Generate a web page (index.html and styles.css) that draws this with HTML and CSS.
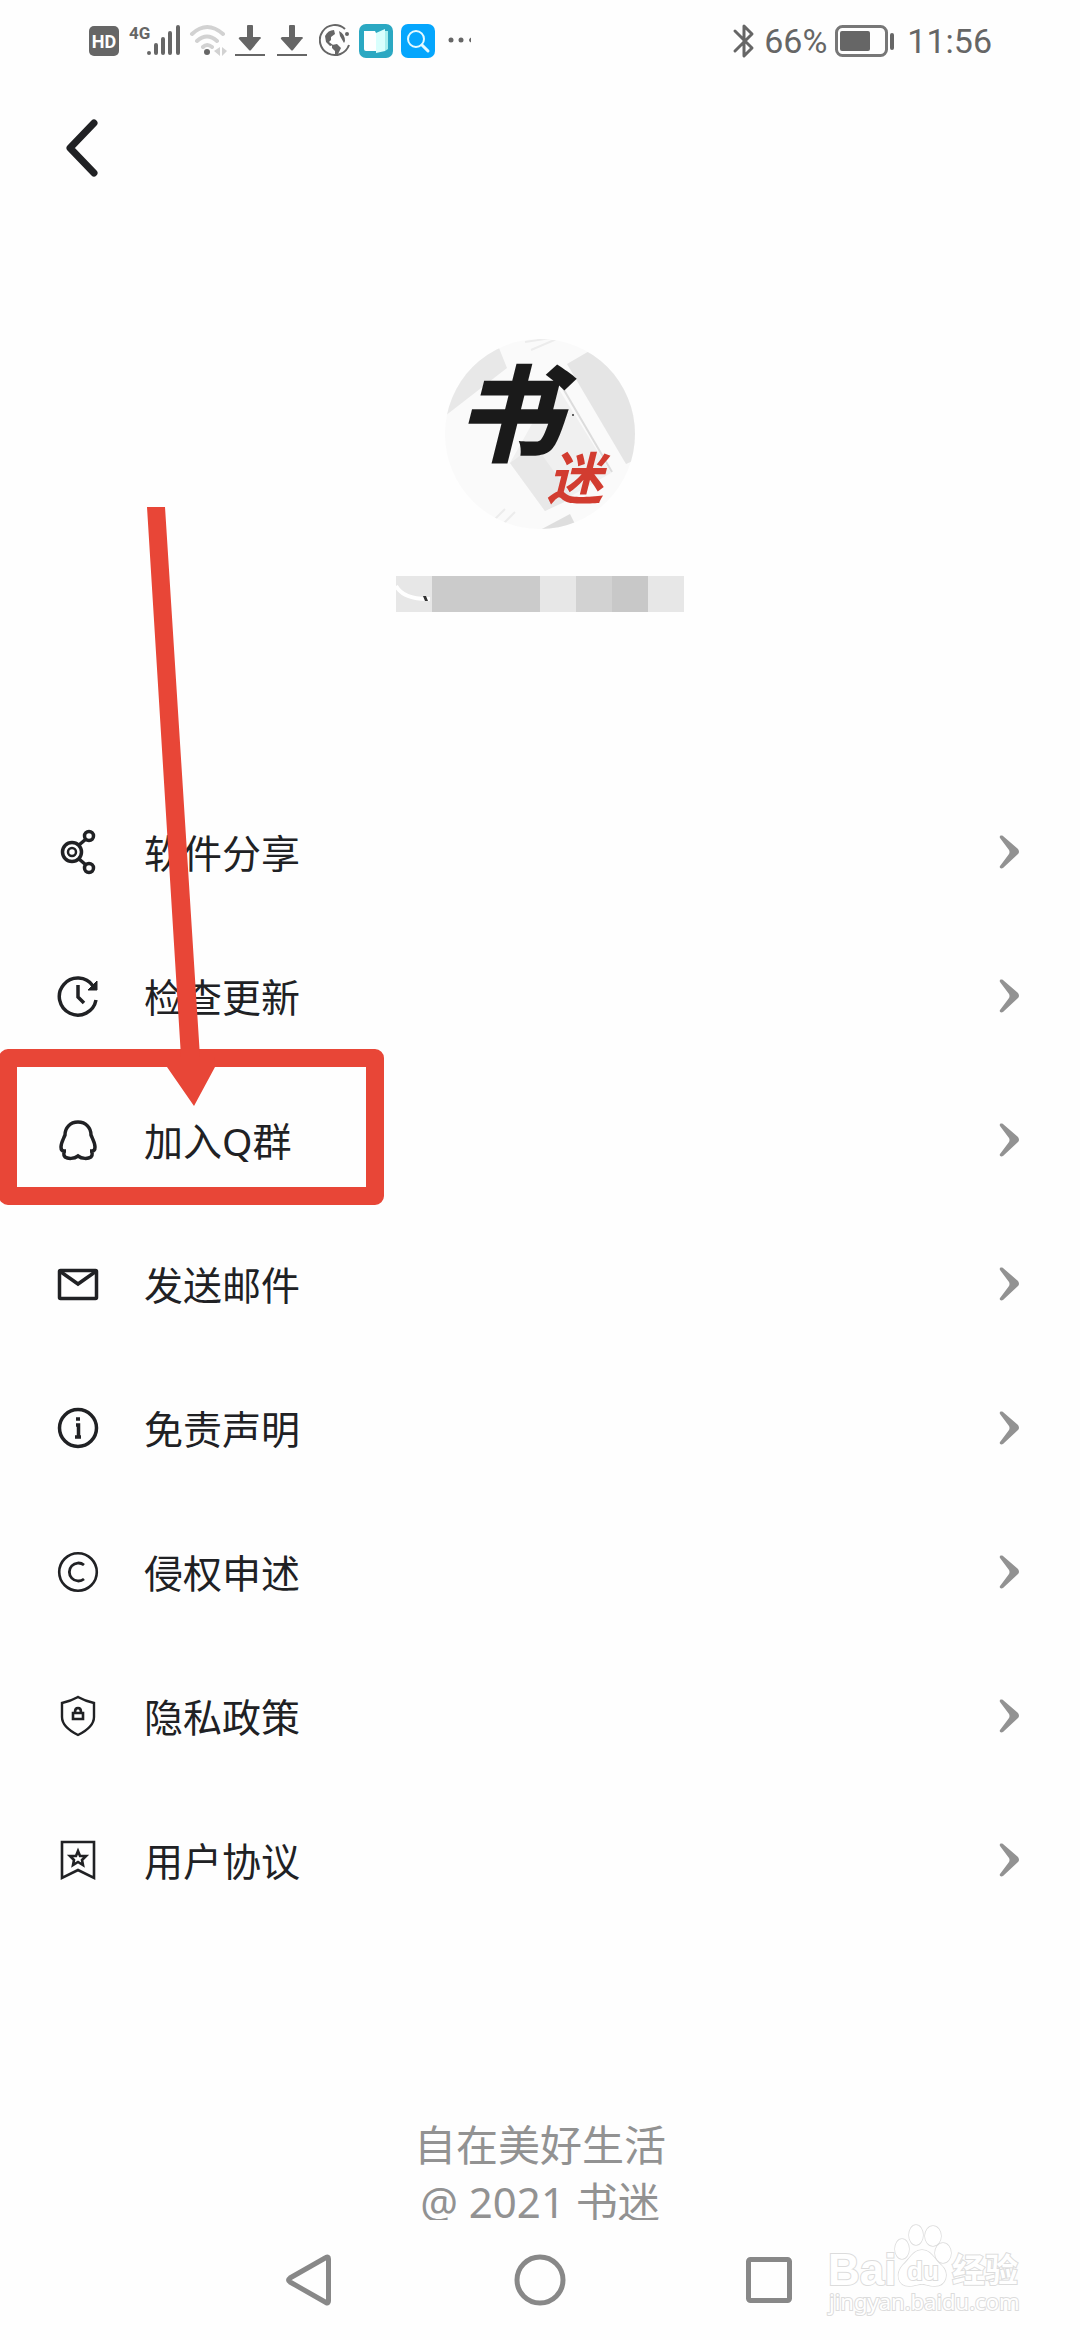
FILE: index.html
```html
<!DOCTYPE html>
<html lang="zh-CN">
<head>
<meta charset="UTF-8" />
<meta name="viewport" content="width=device-width, initial-scale=1.0" />
<title>书迷</title>
<link rel="stylesheet" href="styles.css">
</head>
<body>
<div class="status-bar">
  <div class="status-left">
    <svg width="33" height="36" viewBox="0 0 33 36">
      <rect x="1" y="3" width="30" height="30" rx="5" fill="#666"/>
      <text class="hd" x="16" y="25" text-anchor="middle">HD</text>
    </svg>
    <svg width="52" height="36" viewBox="0 0 52 36">
      <text class="net" x="0" y="16">4G</text>
      <g stroke="#666" stroke-width="4" stroke-linecap="round">
        <path d="M20 30v.1M27 22v8M34 16v14M41 10v20M49 4v26"/>
      </g>
    </svg>
    <svg width="38" height="36" viewBox="0 0 38 36">
      <g fill="none" stroke="#d2d2d2" stroke-width="4" stroke-linecap="round">
        <path d="M3 11Q18 -3 34 11M8 18Q18 9 28 18M14 24Q18 20 23 24"/>
      </g>
      <circle cx="18" cy="29" r="3" fill="#666"/>
      <path d="M31 24v9l-6-5zM33 24v9l5-5z" fill="#d2d2d2"/>
    </svg>
    <svg width="34" height="36" viewBox="0 0 34 36">
      <path d="M12 3q0-1 1-1h4q1 0 1 1v11h7q2 1 0 2L16 27q-1 1-2 0L4 16q-1-1 1-2h7z" fill="#666"/>
      <path d="M0 32h30" stroke="#666" stroke-width="2"/>
    </svg>
    <svg width="34" height="36" viewBox="0 0 34 36">
      <path d="M12 3q0-1 1-1h4q1 0 1 1v11h7q2 1 0 2L16 27q-1 1-2 0L4 16q-1-1 1-2h7z" fill="#666"/>
      <path d="M0 32h30" stroke="#666" stroke-width="2"/>
    </svg>
    <svg width="32" height="36" viewBox="0 0 32 36">
      <path d="M26 6A15 15 0 1 0 30 22" fill="none" stroke="#666" stroke-width="2"/>
      <path d="M6 13q3-6 9-6l1 4-4 3v3l-2 2 4 3-3 1-4-4zM13 22l5-1 4 4-3 6-3 1 0-4-3-3zM20 8q6 3 6 10l-1 2-4-7z" fill="#666"/>
      <circle cx="28" cy="11" r="2" fill="#666"/>
    </svg>
    <svg width="34" height="36" viewBox="0 0 34 36">
      <rect y="1" width="34" height="34" rx="7" fill="#2ba8c2"/>
      <path d="M5 8h11l1 2v18H7q-2 0-2-2z" fill="#fff"/>
      <path d="M17 10l9-4v22l-9 2z" fill="#d9fffd"/>
      <path d="M26 8h3v18l-3 2z" fill="#a9efee"/>
    </svg>
    <svg width="34" height="36" viewBox="0 0 34 36">
      <rect y="1" width="34" height="34" rx="7" fill="#05a6fd"/>
      <circle cx="15" cy="16" r="8" fill="none" stroke="#e4faff" stroke-width="2"/>
      <path d="M21 22l6 6" stroke="#e4faff" stroke-width="3" stroke-linecap="round"/>
    </svg>
    <svg width="28" height="36" viewBox="0 0 28 36">
      <g fill="#666"><circle cx="8" cy="17" r="2.5"/><circle cx="18" cy="17" r="2.5"/><path d="M28 14.500v5q-2-1-2-2.500t2-2.500z"/></g>
    </svg>
  </div>
  <div class="status-right">
    <svg width="24" height="36" viewBox="0 0 24 36">
      <path d="M3 8l17 17-8 8V3l8 8L3 28" fill="none" stroke="#666" stroke-width="3" stroke-linecap="round" stroke-linejoin="round"/>
    </svg>
    <span>66%</span>
    <svg class="battery" width="60" height="36" viewBox="0 0 60 36">
      <rect x="1.500" y="3.500" width="50" height="29" rx="6" fill="none" stroke="#777" stroke-width="3"/>
      <rect x="5" y="8" width="30" height="20" rx="2" fill="#666"/>
      <rect x="55" y="10" width="4" height="17" rx="2" fill="#666"/>
    </svg>
    <span>11:56</span>
  </div>
</div>

<main class="content">
  <header class="top-bar">
    <button class="back" aria-label="返回">
      <svg width="36" height="60" viewBox="0 0 36 60">
        <path d="M32 5L8 30l24 25" fill="none" stroke="#202124" stroke-width="7" stroke-linecap="round" stroke-linejoin="round"/>
      </svg>
    </button>
  </header>

  <section class="profile">
    <svg class="avatar" width="190" height="192" viewBox="0 0 190 192">
      <defs><clipPath id="round"><circle cx="95" cy="96" r="95"/></clipPath></defs>
      <g clip-path="url(#round)">
        <rect width="190" height="192" fill="#fafafa"/>
        <path d="M0 0h50l12 30L0 78z" fill="#e8e8e8"/>
        <path d="M122 26l24-14 44 0v110l-9 4z" fill="#e5e5e5"/>
        <path d="M65 125l45-80 56 90-66 38z" fill="#f0f0f0"/>
        <path d="M109 35l58 99" stroke="#dcdcdc" stroke-width="2"/>
        <path d="M65 125l35 48 28-13-38-53z" fill="#e8e8e8"/>
        <path d="M95 192l30-16 8 16z" fill="#dedede"/>
        <path d="M46 185l14-14M56 188l14-14M80 4l26-4M86 12l28-12" stroke="#ececec" stroke-width="2"/>
      </g>
      <circle cx="128" cy="77" r="1" fill="#333"/>
      <text class="logo-shu" x="10" y="116">书</text>
      <text class="logo-mi" x="102" y="161">迷</text>
    </svg>
    <div class="mosaic">
      <i class="tone-1"></i><i class="tone-3"></i><i class="tone-3"></i><i class="tone-3"></i><i class="tone-1"></i><i class="tone-2"></i><i class="tone-4"></i><i class="tone-1"></i>
      <svg class="stroke" width="36" height="36" viewBox="0 0 36 36">
        <path d="M0 10q8 14 34 13" fill="none" stroke="#fff" stroke-width="4"/>
        <path d="M27 20l3 0 2 5-3 0z" fill="#333"/>
      </svg>
    </div>
  </section>

  <ul class="menu">
    <li><a href="#" class="item">
      <svg class="icon" viewBox="0 0 40 40">
        <circle cx="14" cy="20" r="9.500"/><circle cx="14" cy="20" r="4" stroke-width="2.500"/>
        <circle cx="31" cy="4" r="4.500"/><circle cx="31" cy="36" r="4.500"/>
        <path d="M21 13l7-6M21 27l7 6"/>
      </svg>
      <span>软件分享</span>
      <svg class="arrow" viewBox="0 0 20 34"><path d="M1 3C0 1 2 0 4 1l15 13q2 3 0 5L4 33c-2 1-4 0-3-2l9-12q1-2 0-4z"/></svg>
    </a></li>
    <li><a href="#" class="item">
      <svg class="icon" viewBox="0 0 40 40">
        <path d="M35 10A18.500 18.500 0 1 0 38 24"/><path d="M20 9v12l6 6"/>
        <path d="M39 5v9H30z" fill="#202124" stroke-width="1"/>
      </svg>
      <span>检查更新</span>
      <svg class="arrow" viewBox="0 0 20 34"><path d="M1 3C0 1 2 0 4 1l15 13q2 3 0 5L4 33c-2 1-4 0-3-2l9-12q1-2 0-4z"/></svg>
    </a></li>
    <li class="marked"><a href="#" class="item">
      <svg class="icon" viewBox="0 0 40 40">
        <path d="M20 2C12 2 7 8 7 15C5 20 3 23 3 27c0 3 1 4 3 4c0 3-1 4 1 6c3 2 9 2 13-1c4 3 10 3 13 1c2-2 1-3 1-6c2 0 3-1 3-4c0-4-2-7-4-12C33 8 28 2 20 2zM6 31l2 0M34 31l-2 0"/>
      </svg>
      <span>加入Q群</span>
      <svg class="arrow" viewBox="0 0 20 34"><path d="M1 3C0 1 2 0 4 1l15 13q2 3 0 5L4 33c-2 1-4 0-3-2l9-12q1-2 0-4z"/></svg>
    </a>
      <svg class="marker" width="385" height="700" viewBox="0 0 385 700">
        <rect x="9" y="552" width="367" height="138" fill="none" stroke="#e84637" stroke-width="18" stroke-linejoin="round"/>
        <path d="M148 1h18l35 550h14l1 10-21 39-27-39v-10h14z" fill="#e84637"/>
      </svg>
    </li>
    <li><a href="#" class="item">
      <svg class="icon" viewBox="0 0 40 40">
        <rect x="1.500" y="6.500" width="37" height="28" rx="1"/><path d="M3 8l17 12L37 8"/>
      </svg>
      <span>发送邮件</span>
      <svg class="arrow" viewBox="0 0 20 34"><path d="M1 3C0 1 2 0 4 1l15 13q2 3 0 5L4 33c-2 1-4 0-3-2l9-12q1-2 0-4z"/></svg>
    </a></li>
    <li><a href="#" class="item">
      <svg class="icon" viewBox="0 0 40 40">
        <circle cx="20" cy="20" r="18.500"/><path d="M18 11h4M18 17h2.500v12M17 29h6"/>
      </svg>
      <span>免责声明</span>
      <svg class="arrow" viewBox="0 0 20 34"><path d="M1 3C0 1 2 0 4 1l15 13q2 3 0 5L4 33c-2 1-4 0-3-2l9-12q1-2 0-4z"/></svg>
    </a></li>
    <li><a href="#" class="item">
      <svg class="icon" viewBox="0 0 40 40">
        <circle cx="20" cy="20" r="18.800" stroke-width="2.600"/><path d="M26 13a9 9 0 1 0 0 14" stroke-width="2.800"/>
      </svg>
      <span>侵权申述</span>
      <svg class="arrow" viewBox="0 0 20 34"><path d="M1 3C0 1 2 0 4 1l15 13q2 3 0 5L4 33c-2 1-4 0-3-2l9-12q1-2 0-4z"/></svg>
    </a></li>
    <li><a href="#" class="item">
      <svg class="icon" viewBox="0 0 40 40">
        <path d="M20 1q7 4 16 6v14q0 10-16 18Q4 31 4 21V7q9-2 16-6z" stroke-width="2.400"/>
        <path d="M15 17h10v6H15zM17 16q0-4 3-4t3 4" stroke-width="2.600"/>
      </svg>
      <span>隐私政策</span>
      <svg class="arrow" viewBox="0 0 20 34"><path d="M1 3C0 1 2 0 4 1l15 13q2 3 0 5L4 33c-2 1-4 0-3-2l9-12q1-2 0-4z"/></svg>
    </a></li>
    <li><a href="#" class="item">
      <svg class="icon" viewBox="0 0 40 40">
        <path d="M4 2h32v36l-16-8-16 8z" stroke-width="2.600"/>
        <path d="M20 11l2 5h6l-4 4 1 5-5-3-5 3 1-5-4-4h6z" stroke-width="2.600"/>
      </svg>
      <span>用户协议</span>
      <svg class="arrow" viewBox="0 0 20 34"><path d="M1 3C0 1 2 0 4 1l15 13q2 3 0 5L4 33c-2 1-4 0-3-2l9-12q1-2 0-4z"/></svg>
    </a></li>
  </ul>

  <footer class="footer">
    <p>自在美好生活</p>
    <p>@ 2021 书迷</p>
  </footer>
</main>

<nav class="nav-bar">
  <button aria-label="后退">
    <svg width="52" height="52" viewBox="0 0 52 52"><path d="M41 3.500q2.500-1.500 2.500 1.500v42q0 3-2.500 1.500L5 28q-3-2 0-4z"/></svg>
  </button>
  <button aria-label="主页">
    <svg width="52" height="52" viewBox="0 0 52 52"><circle cx="26" cy="26" r="23"/></svg>
  </button>
  <button aria-label="最近任务">
    <svg width="52" height="52" viewBox="0 0 52 52"><rect x="5.500" y="5.500" width="41" height="41" rx="2"/></svg>
  </button>
  <svg class="watermark" width="200" height="100" viewBox="0 0 200 100">
    <text class="wm-bai" x="2" y="61">Bai</text>
    <g fill="#fff" stroke="#dcdcdc" stroke-width="1.500">
      <ellipse cx="76" cy="25" rx="7" ry="10"/><ellipse cx="90" cy="11" rx="7" ry="10"/>
      <ellipse cx="107" cy="12" rx="8" ry="10"/><ellipse cx="117" cy="29" rx="8" ry="10"/>
      <path d="M96 26c9 0 12 9 19 15c9 8 5 21-6 21c-7 0-9-2-13-2s-7 2-13 2c-11 0-14-12-6-21C84 35 87 26 96 26z"/>
    </g>
    <text class="wm-du" x="81" y="56">du</text>
    <text class="wm-exp" x="126" y="58">经验</text>
    <text class="wm-url" x="3" y="86">jingyan.baidu.com</text>
  </svg>
</nav>
</body>
</html>
```
FILE: styles.css
```css
* {
  box-sizing: border-box;
}
body {
  margin: 0;
  height: 100vh;
  display: flex;
  flex-direction: column;
  background-color: #fefefe;
  color: #202124;
  font-family: "Noto Sans", "Noto Sans CJK SC", sans-serif;
}
svg {
  display: block;
  flex: none;
}
button {
  padding: 0;
  border: none;
  background: none;
  cursor: pointer;
}

/* status bar */
.status-bar {
  display: flex;
  justify-content: space-between;
  align-items: center;
  height: 82px;
  padding: 0 88px;
  color: #666;
  font-family: Roboto, sans-serif;
  font-size: 34px;
}
.status-left {
  display: flex;
  gap: 8px;
}
.status-right {
  display: flex;
  align-items: center;
  gap: 8px;
}
.battery {
  margin-right: 4px;
}
.hd {
  font-size: 18px;
  font-weight: 700;
  fill: #fff;
}
.net {
  font-size: 17px;
  font-weight: 700;
  fill: #666;
}

/* page content */
.content {
  flex: 1;
  min-height: 0;
  overflow: hidden;
}
.top-bar {
  display: flex;
  align-items: center;
  height: 132px;
  padding-left: 62px;
}
.profile {
  display: flex;
  flex-direction: column;
  align-items: center;
  gap: 46px;
  padding: 124px 0 168px;
}
.logo-shu {
  font-size: 106px;
  font-weight: 900;
  font-style: italic;
  fill: #1a1a1a;
}
.logo-mi {
  font-size: 56px;
  font-weight: 700;
  font-style: italic;
  fill: #d23c30;
}
.mosaic {
  position: relative;
  display: flex;
}
.mosaic i {
  width: 36px;
  height: 36px;
}
.tone-1 {
  background-color: #e7e7e7;
}
.tone-2 {
  background-color: #d2d2d2;
}
.tone-3 {
  background-color: #cbcbcb;
}
.tone-4 {
  background-color: #c8c8c8;
}
.stroke {
  position: absolute;
  left: 0;
  top: 0;
}

/* menu */
.menu {
  margin: 0;
  padding: 0;
  list-style: none;
}
.item {
  display: flex;
  align-items: center;
  height: 144px;
  padding: 0 61px 0 58px;
  color: inherit;
  font-size: 39px;
  text-decoration: none;
}
.item span {
  flex: 1;
  padding: 0 0 2px 46px;
}
.icon {
  width: 40px;
  height: 40px;
  overflow: visible;
  fill: none;
  stroke: #202124;
  stroke-width: 3.5px;
}
.arrow {
  width: 20px;
  height: 34px;
  fill: #929292;
}
.marked {
  position: relative;
}
.marker {
  position: absolute;
  left: -1px;
  bottom: 6px;
  pointer-events: none;
}

/* footer */
.footer {
  padding-top: 184px;
  color: #929292;
  font-size: 42px;
  line-height: 57px;
  text-align: center;
}
.footer p {
  margin: 0;
}

/* bottom navigation */
.nav-bar {
  position: relative;
  display: flex;
  justify-content: center;
  align-items: center;
  gap: 177px;
  height: 120px;
}
.nav-bar button svg {
  fill: none;
  stroke: #888;
  stroke-width: 5;
}
.watermark {
  position: absolute;
  right: 54px;
  top: 4px;
  fill: #fff;
  stroke: #dcdcdc;
  stroke-width: 2;
  paint-order: stroke;
}
.wm-bai {
  font: 700 44px "Liberation Sans", sans-serif;
}
.wm-du {
  font: 700 26px "Liberation Sans", sans-serif;
}
.wm-exp {
  font: 700 33px "Noto Sans CJK SC", sans-serif;
}
.wm-url {
  font-size: 22px;
}
```
